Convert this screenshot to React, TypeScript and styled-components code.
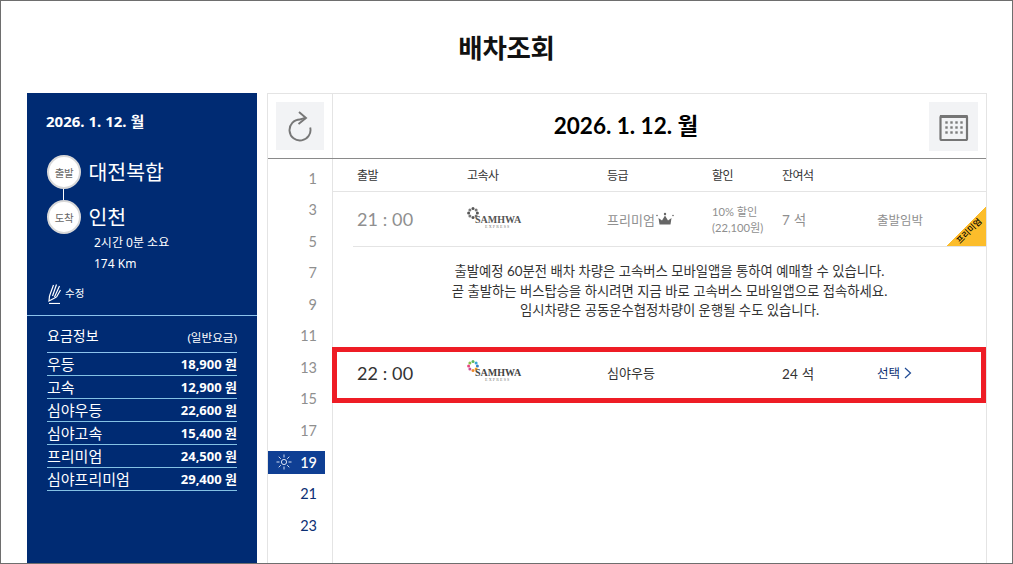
import React from "react";
import styled, { createGlobalStyle } from "styled-components";

const Global = createGlobalStyle`
  html, body { margin: 0; padding: 0; background: #fff; }
  * { box-sizing: border-box; }
`;
const sans = `"Lato", "Noto Sans CJK KR", sans-serif`;
const plex = `"Noto Sans", "Noto Sans CJK KR", sans-serif`;

const Frame = styled.div`
  width: 1013px; height: 564px; overflow: hidden;
  border: 1px solid #6e6e6e;
  font-family: ${sans}; color: #333;
`;
const Title = styled.h1`
  margin: 0; height: 92px; padding-top: 27px;
  text-align: center; font-size: 26.5px; line-height: 40px; font-weight: 700; color: #111;
  letter-spacing: -0.3px;
`;
const Content = styled.div`
  display: flex; gap: 10px; padding-left: 26px; height: 470px;
`;
const Side = styled.aside`
  width: 230px; background: #002b73; color: #fff; font-family: ${plex};
`;
const SideTop = styled.div`
  height: 223px; padding: 18px 20px 0 19px; border-bottom: 1px solid #8cc3ec;
`;
const SideDate = styled.div`
  font-size: 15px; font-weight: 700; line-height: 20px; margin-bottom: 24px;
`;
const Route = styled.div<{ $last?: boolean }>`
  display: flex; align-items: center; gap: 7.5px; height: 34px; margin-left: 1px;
  margin-bottom: ${p => (p.$last ? "0" : "11px")}; position: relative;
`;
const Connector = styled.span`
  position: absolute; left: 16px; top: 34px; width: 1px; height: 11px; background: #fff;
`;
const Circle = styled.span`
  width: 34px; height: 34px; border-radius: 50%; background: #fff; border: 2px solid #d8d8d8;
  color: #666; font-size: 10.5px; display: flex; align-items: center; justify-content: center;
  flex: none; letter-spacing: -0.5px;
`;
const Place = styled.span`
  font-size: 20.5px; line-height: 30px;
`;
const Meta = styled.div`
  margin: -2px 0 0 48px; font-size: 12px; line-height: 21px;
`;
const Edit = styled.div`
  display: flex; align-items: center; gap: 3px; margin: 8px 0 0 1px; font-size: 10.5px; height: 20px;
`;
const Fares = styled.div`
  padding: 10px 20px 0 20px;
`;
const FareHead = styled.div`
  display: flex; justify-content: space-between; align-items: flex-end; height: 27px; padding-bottom: 6px;
  border-bottom: 1px solid #8cc3ec; font-size: 14px; line-height: 20px;
  small { font-size: 11.6px; line-height: 16px; }
`;
const FareRow = styled.div`
  display: flex; justify-content: space-between; align-items: center; height: 23px; padding-bottom: 2px;
  border-bottom: 1px solid #84c2e4; font-size: 15px;
  b { font-size: 13px; font-weight: 700; }
`;
const Main = styled.main`
  width: 720px; border: 1px solid #e4e4e4; border-bottom: 0; display: flex; flex-direction: column;
`;
const Head = styled.header`
  display: flex; height: 65px; border-bottom: 1px solid #8a8a8a; flex: none;
`;
const RefreshCell = styled.div`
  width: 65px; flex: none; border-right: 1px solid #e4e4e4; padding: 8px 0 0 8px;
`;
const IconBtn = styled.button<{ $size: number }>`
  width: ${p => p.$size}px; height: ${p => p.$size}px; padding: 0; border: 0; background: #f2f3f5;
  display: flex; align-items: center; justify-content: center;
`;
const HeadDate = styled.div`
  flex: 1; text-align: center; font-size: 22.5px; font-weight: 700; color: #000; line-height: 64px;
  margin-right: 10px;
`;
const CalCell = styled.div`
  width: 57px; flex: none; padding-top: 8px;
`;
const Body = styled.div`
  display: flex; flex: 1;
`;
const Hours = styled.nav`
  width: 65px; flex: none; border-right: 1px solid #e4e4e4; padding-top: 3.5px; padding-right: 7px;
`;
const Hour = styled.div<{ $state: "past" | "now" | "next" }>`
  height: 31.5px; display: flex; align-items: center; justify-content: flex-end; gap: 8px;
  padding-right: 8px; font-size: 14.5px;
  ${p => p.$state === "past" && "color:#8f8f8f;"}
  ${p => p.$state === "next" && "color:#0c2f74;"}
  ${p => p.$state === "now" && `
    color:#fff; background:#0f3f94; height:23px; margin:4.5px 0 4.5px; font-weight: 500;
  `}
`;
const Table = styled.section`
  flex: 1; min-width: 0;
`;
const cols = "110px 140px 105px 70px 95px 1fr";
const Columns = styled.div`
  display: grid; grid-template-columns: ${cols}; height: 33px; padding-left: 24px; align-items: center;
  border-bottom: 1px solid #e4e4e4; font-size: 12px; letter-spacing: -0.5px; color: #333; padding-bottom: 2px;
`;
const Row = styled.div<{ $muted?: boolean }>`
  display: grid; grid-template-columns: ${cols}; align-items: center;
  color: ${p => (p.$muted ? "#8f8f8f" : "#333")};
`;
const TopRow = styled(Row)`
  height: 55px; margin-left: 20px; padding-left: 4px; border-bottom: 1px solid #e4e4e4; position: relative; overflow: hidden;
`;
const Selected = styled(Row)`
  height: 56px; margin-left: -1px; border: 5px solid #ee1c25; padding: 0 0 5px 20px;
`;
const Time = styled.span`
  font-size: 18px; letter-spacing: 0.1px;
`;
const Grade = styled.span`
  font-size: 13px; display: flex; align-items: center; gap: 1px;
`;
const Discount = styled.span`
  font-size: 11.2px; line-height: 16px; padding-top: 1px;
`;
const Seats = styled.span`
  font-size: 13.5px; letter-spacing: 0.2px;
`;
const Status = styled.span`
  font-size: 12.5px;
`;
const Pick = styled.span`
  font-size: 12.5px; color: #0c2f74; display: flex; align-items: center; gap: 4px;
`;
const Ribbon = styled.span`
  position: absolute; right: 0; bottom: 0; width: 40px; height: 39px;
  background: linear-gradient(135deg, transparent 50%, #fcbd2b 50%);
`;
const RibbonText = styled.span`
  position: absolute; right: -3px; bottom: 10px; width: 40px; text-align: center;
  font-size: 8.5px; line-height: 10px; font-weight: 500; color: #000; transform: rotate(-45deg); white-space: nowrap;
`;
const Notice = styled.div`
  height: 100px; padding: 15px 0 0 20px; text-align: center; font-size: 13.35px; line-height: 19.5px; color: #333;
`;
const Logo = styled.span`
  display: flex; flex-direction: column; width: 56px; height: 24px; margin-top: -1px;
`;
const Wordmark = styled.span<{ $muted?: boolean }>`
  margin: -3px 0 0 8px; font-family: "Liberation Serif", serif; font-weight: 700; font-size: 10px;
  line-height: 8px; color: ${p => (p.$muted ? "#555" : "#444")};
  white-space: nowrap;
`;
const Express = styled.span`
  margin: 1px 0 0 18px; font-family: "Liberation Serif", serif; font-size: 4px; line-height: 4px;
  letter-spacing: 1.2px; color: #777;
`;

const Ring = ({ muted }: { muted?: boolean }) => {
  const colours = muted
    ? ["#555", "#777", "#555", "#777", "#555", "#777", "#555", "#777"]
    : ["#5cb85c", "#38a6d8", "#3a7fc4", "#f0a020", "#ef8a2a", "#c94f9a", "#e8457c", "#8ac24a"];
  return (
    <svg width="12" height="12" viewBox="0 0 12 12">
      {colours.map((c, i) => {
        const a = (i * Math.PI) / 4 - Math.PI / 2;
        const x = 6 + 4.4 * Math.cos(a);
        const y = 6 + 4.4 * Math.sin(a);
        return <circle key={i} cx={x} cy={y} r={1.5} fill={c} />;
      })}
    </svg>
  );
};
const BusLogo = ({ muted }: { muted?: boolean }) => (
  <Logo>
    <Ring muted={muted} />
    <Wordmark $muted={muted}>SAMHWA</Wordmark>
    <Express>EXPRESS</Express>
  </Logo>
);

const Refresh = () => (
  <svg width="26" height="32" viewBox="0 0 26 32" fill="none" stroke="#777" strokeWidth="1.9">
    <path d="M19 8 C16 8 14.5 9.5 13 9.5 A10.5 10.5 0 1 0 23.2 17.5" />
    <path d="M12 2 L19 8 L11.5 14" />
  </svg>
);
const Calendar = () => (
  <svg width="30" height="28" viewBox="0 0 30 28">
    <rect x="1.5" y="3" width="26.5" height="24" rx="1" fill="none" stroke="#757575" strokeWidth="2.2" />
    <rect x="1" y="2" width="27.5" height="3" fill="#757575" />
    {[9.5, 14.5, 19.5].flatMap(y =>
      [7.5, 12.5, 17.5, 22.5].map(x => <rect key={`${x}-${y}`} x={x - 1.2} y={y - 1.2} width="2.4" height="2.4" fill="#7d7d7d" />)
    )}
  </svg>
);
const Pencil = () => (
  <svg width="15" height="24" viewBox="0 -4 15 24" fill="none" stroke="#fff" strokeWidth="1.2">
    <path d="M2.5 12 L6.5 1 M5.5 12 L9.5 0.5 M7.5 13 L12.5 2 M9.5 13 L13.5 6" />
    <path d="M2.5 12 L2 17 L9.5 13" />
    <path d="M2 19.5 H13" />
  </svg>
);
const Crown = () => (
  <svg width="18" height="14" viewBox="0 0 18 14" fill="#666">
    <path d="M3.5 12.5 L2.5 6 L6 8.5 L9 3.5 L12 8.5 L15.5 6 L14.5 12.5 Z" />
    <circle cx="9" cy="2" r="1.2" />
    <circle cx="1" cy="3.5" r="0.8" />
    <circle cx="17" cy="3.5" r="0.8" />
  </svg>
);
const Sun = () => (
  <svg width="16" height="16" viewBox="0 0 16 16" fill="none" stroke="#d5def0" strokeWidth="1">
    <circle cx="8" cy="8" r="2.6" />
    <path d="M8 0.5V3.5M8 12.5V15.5M0.5 8H3.5M12.5 8H15.5M2.7 2.7L4.8 4.8M11.2 11.2L13.3 13.3M13.3 2.7L11.2 4.8M4.8 11.2L2.7 13.3" />
  </svg>
);
const Chevron = () => (
  <svg width="8" height="12" viewBox="0 0 8 12" fill="none" stroke="#1f4a94" strokeWidth="1.2">
    <path d="M1 1 L6.5 6 L1 11" />
  </svg>
);

const fares = [
  ["우등", "18,900 원"],
  ["고속", "12,900 원"],
  ["심야우등", "22,600 원"],
  ["심야고속", "15,400 원"],
  ["프리미엄", "24,500 원"],
  ["심야프리미엄", "29,400 원"],
];
const hours: [number, "past" | "now" | "next"][] = [
  [1, "past"], [3, "past"], [5, "past"], [7, "past"], [9, "past"], [11, "past"],
  [13, "past"], [15, "past"], [17, "past"], [19, "now"], [21, "next"], [23, "next"],
];

export default function App() {
  return (
    <Frame>
      <Global />
      <Title>배차조회</Title>
      <Content>
        <Side>
          <SideTop>
            <SideDate>2026. 1. 12. 월</SideDate>
            <Route>
              <Circle>출발</Circle>
              <Place>대전복합</Place>
              <Connector />
            </Route>
            <Route $last>
              <Circle>도착</Circle>
              <Place>인천</Place>
            </Route>
            <Meta>2시간 0분 소요<br />174 Km</Meta>
            <Edit><Pencil />수정</Edit>
          </SideTop>
          <Fares>
            <FareHead><span>요금정보</span><small>(일반요금)</small></FareHead>
            {fares.map(([n, v]) => (
              <FareRow key={n}><span>{n}</span><b>{v}</b></FareRow>
            ))}
          </Fares>
        </Side>
        <Main>
          <Head>
            <RefreshCell><IconBtn $size={48} aria-label="새로고침"><Refresh /></IconBtn></RefreshCell>
            <HeadDate>2026. 1. 12. 월</HeadDate>
            <CalCell><IconBtn $size={49} aria-label="달력"><Calendar /></IconBtn></CalCell>
          </Head>
          <Body>
            <Hours>
              {hours.map(([h, s]) => (
                <Hour key={h} $state={s}>{s === "now" && <Sun />}{h}</Hour>
              ))}
            </Hours>
            <Table>
              <Columns>
                <span>출발</span><span>고속사</span><span>등급</span><span>할인</span><span>잔여석</span>
              </Columns>
              <TopRow $muted>
                <Time>21 : 00</Time>
                <BusLogo muted />
                <Grade>프리미엄<Crown /></Grade>
                <Discount>10% 할인<br />(22,100원)</Discount>
                <Seats>7 석</Seats>
                <Status>출발임박</Status>
                <Ribbon><RibbonText>프리미엄</RibbonText></Ribbon>
              </TopRow>
              <Notice>
                출발예정 60분전 배차 차량은 고속버스 모바일앱을 통하여 예매할 수 있습니다.<br />
                곧 출발하는 버스탑승을 하시려면 지금 바로 고속버스 모바일앱으로 접속하세요.<br />
                임시차량은 공동운수협정차량이 운행될 수도 있습니다.
              </Notice>
              <Selected>
                <Time>22 : 00</Time>
                <BusLogo />
                <Grade>심야우등</Grade>
                <span />
                <Seats>24 석</Seats>
                <Pick>선택<Chevron /></Pick>
              </Selected>
            </Table>
          </Body>
        </Main>
      </Content>
    </Frame>
  );
}
